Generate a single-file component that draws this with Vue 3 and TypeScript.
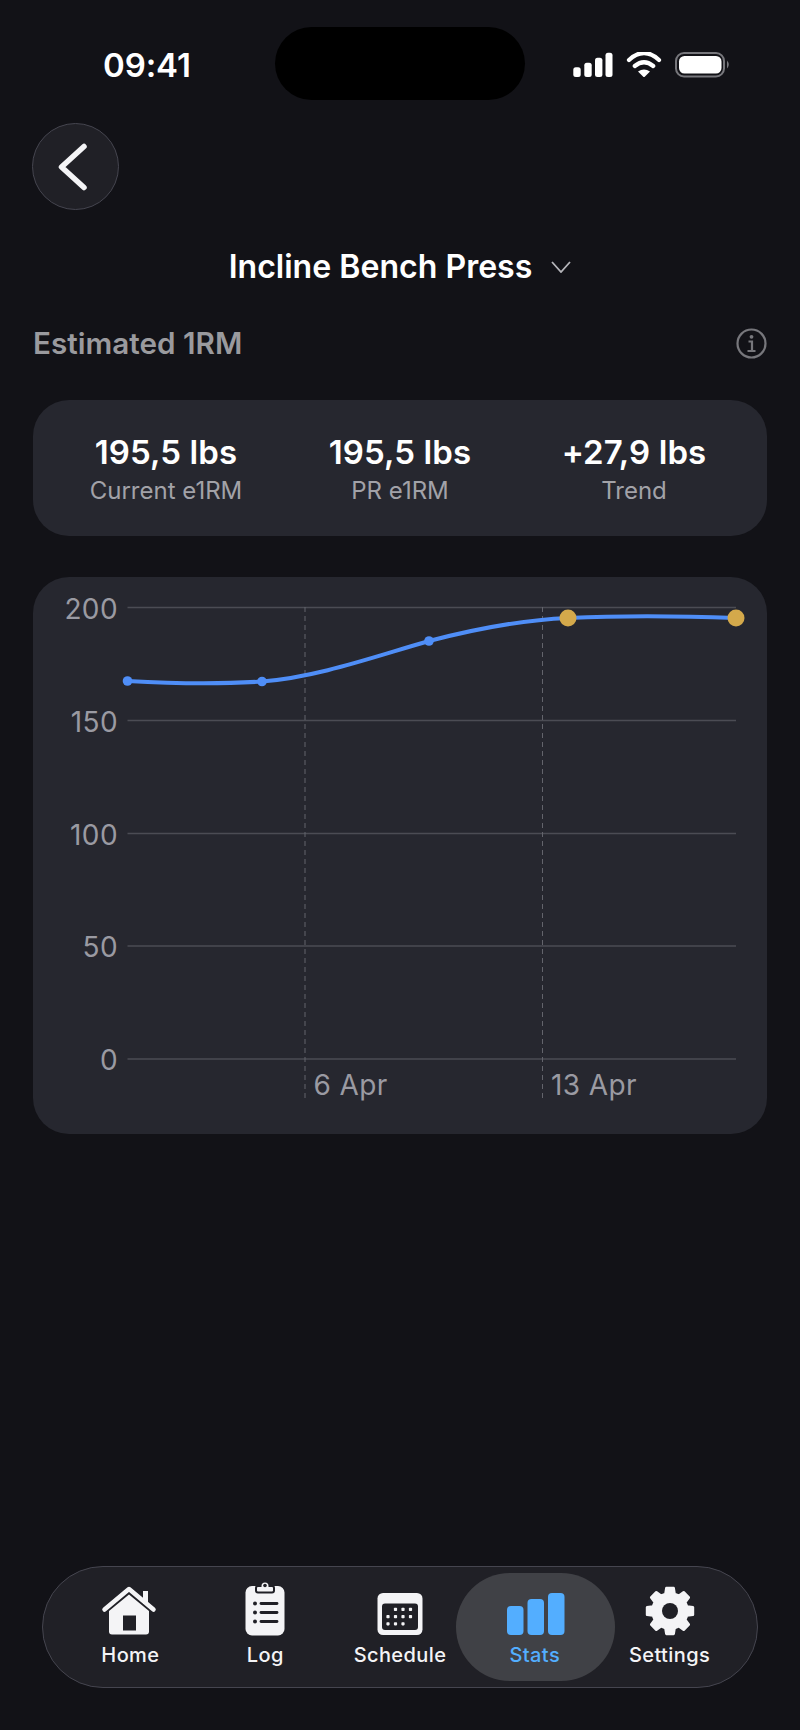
<template>
  <div class="screen">
    <header class="status">
      <span class="time">09:41</span>
      <div class="island"></div>
      <svg class="status-icons" width="158" height="26" viewBox="573 52 158 26">
        <rect v-for="b in signal" :key="b.x" :x="b.x" :y="b.y" :width="b.w" :height="77 - b.y" rx="2.5" fill="#fff" />
        <path d="M629 60Q644 46 659 60M634.8 66Q644 58.500 653.200 66" fill="none" stroke="#fff" stroke-width="4.200" stroke-linecap="round" />
        <path d="M638 71.500Q644 67.500 650 71.500L644.500 77H643.500Z" fill="#fff" />
        <rect x="676" y="53" width="48" height="23.500" rx="8" fill="none" stroke="#77777c" stroke-width="2" />
        <rect x="679" y="56" width="42.500" height="17.500" rx="5.500" fill="#fff" />
        <path d="M727 60.500Q730.500 64.500 727 68.500Z" fill="#77777c" />
      </svg>
    </header>

    <button class="back" aria-label="Back">
      <svg width="32" height="50" viewBox="0 0 32 50">
        <path d="M27 4.500L4.500 25L27 45.500" fill="none" stroke="#f4f4f6" stroke-width="5.500" stroke-linecap="round" stroke-linejoin="round" />
      </svg>
    </button>

    <div class="title-row">
      <h1>Incline Bench Press</h1>
      <svg width="20" height="12" viewBox="0 0 20 12"><path d="M1 1L10 11L19 1" fill="none" stroke="#b5b5ba" stroke-width="1.800" /></svg>
    </div>

    <div class="section-row">
      <h2>Estimated 1RM</h2>
      <svg width="31" height="31" viewBox="0 0 31 31">
        <circle cx="15.500" cy="15.500" r="14" fill="none" stroke="#77777c" stroke-width="2.200" />
        <circle cx="15.500" cy="8.800" r="1.900" fill="#77777c" />
        <path d="M12.500 13.500H16V22.500M11.500 23H19.500" fill="none" stroke="#77777c" stroke-width="2.200" />
      </svg>
    </div>

    <section class="card stats">
      <div v-for="s in stats" :key="s.label" class="stat">
        <div class="stat-value">{{ s.value }}</div>
        <div class="stat-label">{{ s.label }}</div>
      </div>
    </section>

    <section class="card chart">
      <svg width="734" height="557" viewBox="33 577 734 557">
        <line v-for="g in grid" :key="g.label" x1="127.500" x2="736" :y1="g.y" :y2="g.y" stroke="#4b4c54" stroke-width="1.500" />
        <line v-for="x in [305, 542.5]" :key="x" :x1="x" :x2="x" y1="607" y2="1102" stroke="#63646c" stroke-width="1" stroke-dasharray="5 4" />
        <text v-for="g in grid" :key="'t' + g.label" x="118" :y="g.y + 11" text-anchor="end" class="axis">{{ g.label }}</text>
        <text x="313.500" y="1095" class="axis">6 Apr</text>
        <text x="551" y="1095" class="axis">13 Apr</text>
        <path d="M127.500 681C172 683.500 217 684.500 262 681.500C318 677 373 657 429 641C475 629 520 620 568 618C624 615.500 680 616 736 618" fill="none" stroke="#4f8ef7" stroke-width="4" />
        <circle v-for="p in points" :key="p.x" :cx="p.x" :cy="p.y" :r="p.pr ? 8.500 : 4.800" :fill="p.pr ? '#d4a94b' : '#4f8ef7'" />
      </svg>
    </section>

    <div class="spacer"></div>

    <nav class="tabbar">
      <div class="tab">
        <svg class="home-icon" width="56" height="50" viewBox="0 0 56 50">
          <path d="M42 5H47V18H42Z" fill="#f4f4f6" />
          <path d="M3.500 23.500L28 3L52.500 23.500" fill="none" stroke="#f4f4f6" stroke-width="4.500" stroke-linecap="round" stroke-linejoin="round" />
          <path fill-rule="evenodd" d="M28 8.500L48 25V45.500Q48 48.500 45 48.500H11Q8 48.500 8 45.500V25ZM22 29.500V44.500H35V29.500Z" fill="#f4f4f6" />
        </svg>
        <span>Home</span>
      </div>
      <div class="tab">
        <svg class="log-icon" width="40" height="56" viewBox="0 0 40 56">
          <rect x="0.500" y="6" width="39" height="49.500" rx="6.500" fill="#f4f4f6" />
          <path d="M11 10.500V8Q11 6 13 6H15.500A4.500 4.500 0 0 1 24.500 6H27Q29 6 29 8V10.500Q29 12.500 27 12.500H13Q11 12.500 11 10.500Z" fill="#f4f4f6" stroke="#202026" stroke-width="2" />
          <circle cx="20" cy="5.500" r="1.800" fill="#202026" />
          <g v-for="y in [23.500, 32.500, 41.500]" :key="y">
            <circle cx="10" :cy="y" r="2" fill="#202026" />
            <line x1="16" x2="32" :y1="y" :y2="y" stroke="#202026" stroke-width="2.800" stroke-linecap="round" />
          </g>
        </svg>
        <span>Log</span>
      </div>
      <div class="tab">
        <svg width="46" height="44" viewBox="0 0 46 44">
          <rect x="0.500" y="1" width="45" height="42" rx="5.500" fill="#f4f4f6" />
          <rect x="5" y="11.500" width="36" height="26.500" rx="3" fill="#202026" />
          <rect v-for="d in calDots" :key="d.k" :x="d.x" :y="d.y" width="3.200" height="3.200" rx="0.800" fill="#f4f4f6" />
        </svg>
        <span>Schedule</span>
      </div>
      <div class="tab active">
        <svg class="bars-icon" width="60" height="44" viewBox="0 0 60 44">
          <rect x="1" y="14" width="16.500" height="29" rx="4" fill="#53aeff" />
          <rect x="21.500" y="7" width="16.500" height="36" rx="4" fill="#53aeff" />
          <rect x="42" y="1" width="16.500" height="42" rx="4" fill="#53aeff" />
        </svg>
        <span>Stats</span>
      </div>
      <div class="tab">
        <svg width="50" height="50" viewBox="0 0 50 50">
          <path :d="gearPath" fill="#f4f4f6" stroke="#f4f4f6" stroke-width="2.600" stroke-linejoin="round" />
          <circle cx="25" cy="25" r="8" fill="#202026" />
        </svg>
        <span>Settings</span>
      </div>
    </nav>
  </div>
</template>

<script setup lang="ts">
interface Stat { value: string; label: string }
interface Point { x: number; y: number; pr: boolean }

const signal = [
  { x: 573.3, y: 67.3, w: 7.4 },
  { x: 584.3, y: 62.7, w: 7.4 },
  { x: 595, y: 57.7, w: 7.4 },
  { x: 605.5, y: 52.7, w: 7 },
]

const stats: Stat[] = [
  { value: '195,5 lbs', label: 'Current e1RM' },
  { value: '195,5 lbs', label: 'PR e1RM' },
  { value: '+27,9 lbs', label: 'Trend' },
]

const grid = [
  { label: '200', y: 607.5 },
  { label: '150', y: 720.5 },
  { label: '100', y: 833.5 },
  { label: '50', y: 946 },
  { label: '0', y: 1059 },
]

const points: Point[] = [
  { x: 127.5, y: 681, pr: false },
  { x: 262, y: 681.5, pr: false },
  { x: 429, y: 641, pr: false },
  { x: 568, y: 618, pr: true },
  { x: 736, y: 618, pr: true },
]

const calRows: number[][] = [
  [1, 2, 3],
  [0, 1, 2, 3],
  [0, 1, 2],
]
const calDots = calRows.flatMap((cols, r) =>
  cols.map((c) => ({ k: `${r}-${c}`, x: 9.4 + c * 7.5, y: 15.8 + r * 7.2 })),
)

function polar(radius: number, degrees: number): string {
  const rad = ((degrees - 90) * Math.PI) / 180
  return `${(25 + radius * Math.cos(rad)).toFixed(2)} ${(25 + radius * Math.sin(rad)).toFixed(2)}`
}
const gearPath =
  Array.from({ length: 8 }, (_, i) => {
    const a = i * 45
    return [
      polar(17.6, a - 15),
      polar(23.2, a - 9),
      polar(23.2, a + 9),
      polar(17.6, a + 15),
    ].join(' L')
  })
    .map((seg, i) => (i === 0 ? 'M' : 'L') + seg)
    .join(' ') + ' Z'
</script>

<style>
html, body { margin: 0; background: #121217; }
</style>

<style scoped>
.screen {
  width: 800px;
  height: 1730px;
  background: #121217;
  color: #fff;
  font-family: Inter, "Liberation Sans", sans-serif;
  display: flex;
  flex-direction: column;
  box-sizing: border-box;
  overflow: hidden;
}
.status {
  height: 100px;
  padding-top: 27px;
  padding-left: 103px;
  box-sizing: border-box;
  display: flex;
  align-items: flex-start;
  flex: none;
}
.time {
  font-size: 33px;
  font-weight: 600;
  line-height: 38px;
  width: 172px;
  margin-top: 19px;
  letter-spacing: -0.1px;
}
.island {
  width: 250px;
  height: 73px;
  border-radius: 37px;
  background: #000;
  flex: none;
}
.status-icons {
  margin-left: 48px;
  margin-top: 25px;
  flex: none;
}
.back {
  width: 87px;
  height: 87px;
  margin: 23px 0 0 32px;
  padding: 0;
  border-radius: 50%;
  background: #202026;
  border: 1.5px solid #45454f;
  box-sizing: border-box;
  display: flex;
  align-items: center;
  justify-content: center;
  flex: none;
}
.back svg { margin-right: 5px; }
.title-row {
  display: flex;
  justify-content: center;
  align-items: center;
  gap: 19px;
  margin-top: 37px;
  height: 40px;
  flex: none;
}
h1 {
  margin: 0;
  font-size: 32.100px;
  font-weight: 600;
  line-height: 40px;
}
.section-row {
  display: flex;
  justify-content: space-between;
  align-items: center;
  margin: 38px 33px 0;
  height: 36px;
  flex: none;
}
h2 {
  margin: 0;
  font-size: 29.700px;
  font-weight: 600;
  color: #9a9a9e;
  line-height: 36px;
}
.card {
  margin-left: 33px;
  margin-right: 33px;
  background: #26272f;
  flex: none;
}
.stats {
  margin-top: 39px;
  height: 136px;
  box-sizing: border-box;
  border-radius: 36px;
  padding: 4px 16px 0;
  display: grid;
  grid-template-columns: repeat(3, 1fr);
  align-items: center;
  text-align: center;
}
.stat-value {
  font-size: 33px;
  font-weight: 600;
  line-height: 38px;
  letter-spacing: 0.1px;
  margin-top: -2px;
}
.stat-label {
  font-size: 24px;
  line-height: 30px;
  color: #a2a2a8;
  margin-top: 5px;
}
.chart {
  margin-top: 41px;
  height: 557px;
  border-radius: 36px;
  overflow: hidden;
}
.chart svg { display: block; }
.axis {
  font-family: Inter, "Liberation Sans", sans-serif;
  font-size: 28px;
  letter-spacing: 0.4px;
  fill: #9a9aa2;
}
.spacer { flex: 1; }
.tabbar {
  margin: 0 42px 42px;
  height: 122px;
  box-sizing: border-box;
  border-radius: 61px;
  background: #202026;
  border: 1.5px solid #45454f;
  padding: 0 20px;
  display: grid;
  grid-template-columns: repeat(5, 1fr);
  flex: none;
}
.tab {
  position: relative;
  display: flex;
  flex-direction: column;
  align-items: center;
  justify-content: flex-end;
  padding-bottom: 19px;
  font-size: 20px;
  font-weight: 500;
  line-height: 26px;
  color: #f4f4f6;
  gap: 6px;
}
.tab svg { position: relative; display: block; }
.tab .home-icon { margin-right: 2px; }
.tab .log-icon { margin-right: 1px; }
.tab .bars-icon { margin-left: 2px; }
.tab span { position: relative; letter-spacing: 0.4px; }
.tab.active { color: #53aeff; }
.tab.active::before {
  content: "";
  position: absolute;
  top: 6px;
  bottom: 6px;
  left: -11px;
  right: -13px;
  border-radius: 54px;
  background: #404146;
}
</style>
